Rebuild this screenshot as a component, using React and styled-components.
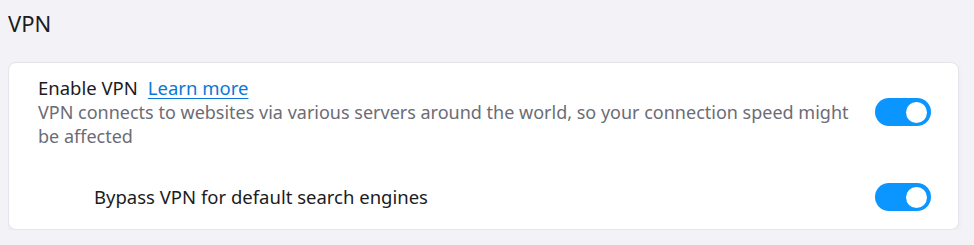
import React, { useState } from "react";
import styled, { createGlobalStyle } from "styled-components";

const Global = createGlobalStyle`
  html, body { background: #f3f3f7; }
  body {
    margin: 8px;
    font-family: "Noto Sans", "Open Sans", sans-serif;
    -webkit-font-smoothing: antialiased;
  }
`;

const Page = styled.div`
  width: 951px;
`;

const Heading = styled.h2`
  margin: 0 0 24px 0;
  font-size: 22px;
  line-height: 30px;
  font-weight: 400;
  color: #1c1c1e;
`;

const Card = styled.section`
  background: #ffffff;
  border: 1px solid #e4e4ea;
  border-radius: 8px;
  box-shadow: 0 3px 6px rgba(0, 0, 0, 0.04);
  padding: 13px 27px 18px 29px;
  display: flex;
  flex-direction: column;
`;

const Row = styled.div`
  display: flex;
  align-items: center;
  gap: 16px;
  padding-left: ${(p) => (p.$indent ? "56px" : "0")};
  margin-top: ${(p) => (p.$first ? "0" : "35px")};
`;

const Text = styled.div`
  flex: 1;
  min-width: 0;
`;

const Label = styled.div`
  font-size: 18.5px;
  line-height: 24px;
  color: #1c1c1e;
`;

const Link = styled.a`
  margin-left: 10px;
  color: #0a78d7;
  text-decoration: underline;
  text-underline-offset: 3px;
  cursor: pointer;
`;

const Desc = styled.div`
  font-size: 18px;
  line-height: 24px;
  color: #6c6c76;
`;

const Track = styled.button`
  flex: none;
  width: 56px;
  height: 28px;
  border: none;
  border-radius: 14px;
  padding: 0 4px;
  background: ${(p) => (p.$on ? "#0a95ff" : "#c7c7cc")};
  display: flex;
  align-items: center;
  justify-content: ${(p) => (p.$on ? "flex-end" : "flex-start")};
  cursor: pointer;
`;

const Knob = styled.span`
  width: 21px;
  height: 21px;
  border-radius: 50%;
  background: #ffffff;
`;

function Toggle({ on, onChange }) {
  return (
    <Track $on={on} onClick={() => onChange(!on)} aria-pressed={on}>
      <Knob />
    </Track>
  );
}

export default function App() {
  const [vpn, setVpn] = useState(true);
  const [bypass, setBypass] = useState(true);
  return (
    <Page>
      <Global />
      <Heading>VPN</Heading>
      <Card>
        <Row $first>
          <Text>
            <Label>
              Enable VPN<Link>Learn more</Link>
            </Label>
            <Desc>
              VPN connects to websites via various servers around the world, so
              your connection speed might be affected
            </Desc>
          </Text>
          <Toggle on={vpn} onChange={setVpn} />
        </Row>
        <Row $indent>
          <Text>
            <Label>Bypass VPN for default search engines</Label>
          </Text>
          <Toggle on={bypass} onChange={setBypass} />
        </Row>
      </Card>
    </Page>
  );
}
